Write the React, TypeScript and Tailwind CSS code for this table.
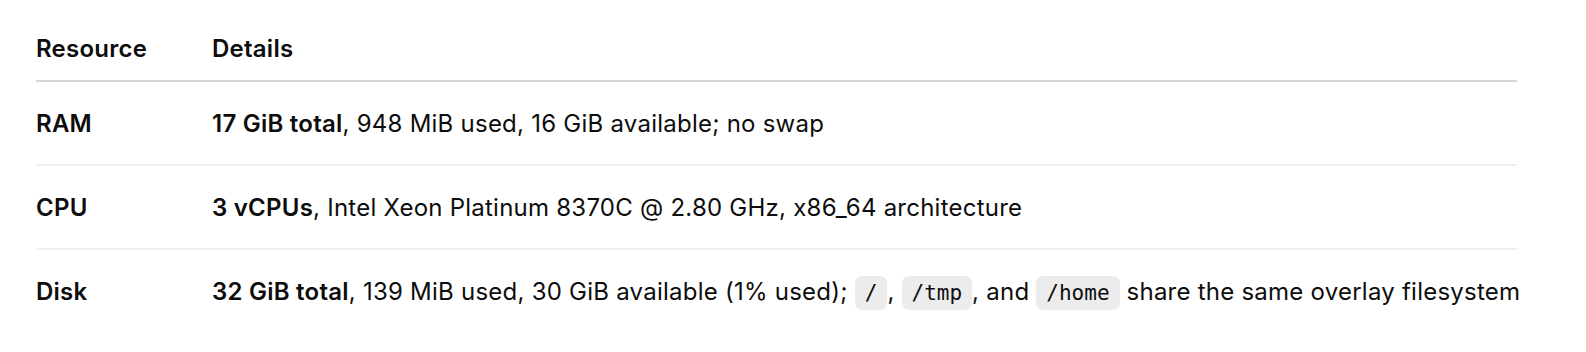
import React from "react";

function Code({ children }: { children: React.ReactNode }) {
  return (
    <code
      className="rounded-[7px] bg-[#ececec] px-[10px] py-[5px] text-[21px] tracking-normal text-[#0d0d0d]"
      style={{ fontFamily: '"DejaVu Sans Mono", "Liberation Mono", monospace' }}
    >
      {children}
    </code>
  );
}

export default function App() {
  const rows: { name: string; details: React.ReactNode }[] = [
    {
      name: "RAM",
      details: (
        <>
          <strong className="font-semibold">17 GiB total</strong>, 948 MiB used, 16 GiB available; no swap
        </>
      ),
    },
    {
      name: "CPU",
      details: (
        <>
          <strong className="font-semibold">3 vCPUs</strong>, Intel Xeon Platinum 8370C @ 2.80 GHz, x86_64 architecture
        </>
      ),
    },
    {
      name: "Disk",
      details: (
        <>
          <strong className="font-semibold">32 GiB total</strong>, 139 MiB used, 30 GiB available (1% used); <Code>/</Code>,{" "}
          <Code>/tmp</Code>, and <Code>/home</Code> share the same overlay filesystem
        </>
      ),
    },
  ];

  return (
    <div
      className="h-[352px] w-[1586px] bg-white px-[36px] text-[24px] tracking-[0.01em] text-[#0d0d0d]"
      style={{ fontFamily: 'Inter, "Noto Sans", sans-serif' }}
    >
      <table className="w-[1481px] table-fixed border-collapse">
        <colgroup>
          <col className="w-[176px]" />
          <col />
        </colgroup>
        <thead>
          <tr className="border-b-2 border-[#d6d6d6]">
            <th className="pb-[13px] pt-[31px] text-left font-semibold leading-[36px]">Resource</th>
            <th className="pb-[13px] pt-[31px] text-left font-semibold leading-[36px]">Details</th>
          </tr>
        </thead>
        <tbody>
          {rows.map((r, i) => (
            <tr key={r.name} className={i < rows.length - 1 ? "border-b-2 border-[#efefef]" : ""}>
              <td className="pb-[22px] pt-[24px] align-top font-semibold leading-[36px]">{r.name}</td>
              <td className="whitespace-nowrap pb-[22px] pt-[24px] align-top leading-[36px]">{r.details}</td>
            </tr>
          ))}
        </tbody>
      </table>
    </div>
  );
}
